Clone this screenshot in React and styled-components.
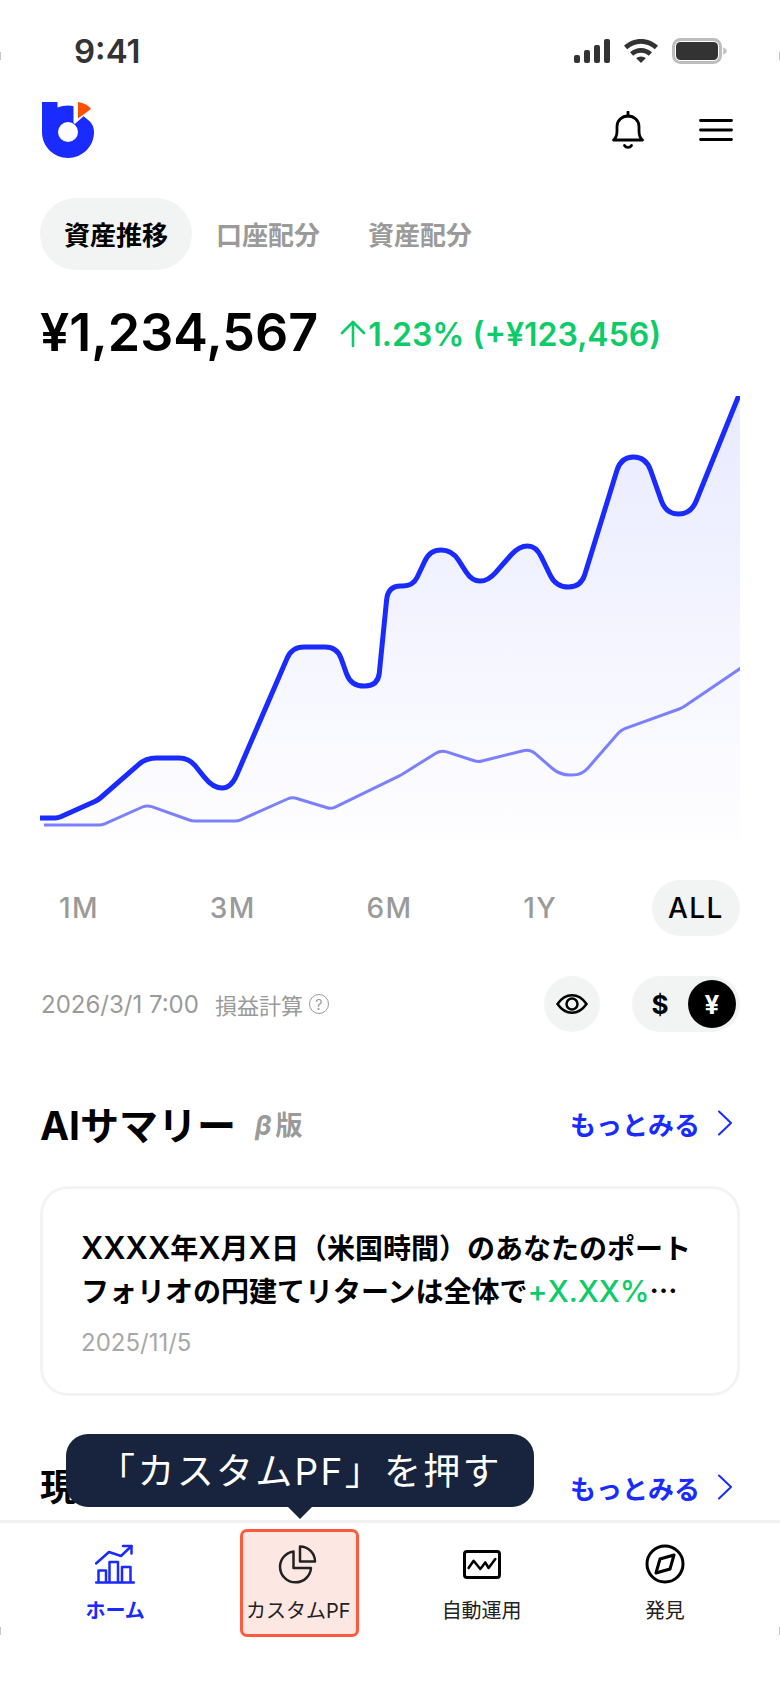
import React from 'react';
import styled, { createGlobalStyle } from "styled-components";

const BLUE = "#1a2bff";
const GREEN = "#0ccb68";
const GREY = "#9a9a9a";
const PILL = "#f2f4f3";

const GlobalStyle = createGlobalStyle`
    html, body {
        margin: 0;
        padding: 0;
        background: #fff;
    }
    *, *::before, *::after {
        box-sizing: border-box;
    }
`;

const Page = styled.div`
    position: relative;
    width: 780px;
    height: 1688px;
    overflow: hidden;
    color: #000;
    font-family: Inter, "Noto Sans CJK JP", sans-serif;
    background:
        linear-gradient(#c8c8c8, #c8c8c8) 0 52px / 1px 8px no-repeat,
        linear-gradient(#c8c8c8, #c8c8c8) 779px 52px / 1px 8px no-repeat,
        linear-gradient(#c8c8c8, #c8c8c8) 0 1627px / 1px 8px no-repeat,
        linear-gradient(#c8c8c8, #c8c8c8) 779px 1627px / 1px 8px no-repeat,
        #fff;
`;
const StatusBar = styled.div`
    height: 102px;
    padding: 0 53px 0 74px;
    display: flex;
    align-items: center;
    justify-content: space-between;
    color: #333;
`;
const Clock = styled.span`
    font-size: 33px;
    font-weight: 600;
`;
const StatusIcons = styled.div`
    display: flex;
    align-items: center;
    gap: 14px;
`;
const Main = styled.main`
    padding: 0 40px;
`;
const Header = styled.header`
    height: 56px;
    padding: 0 7px 0 2px;
    display: flex;
    align-items: center;
    justify-content: space-between;
`;
const HeaderActions = styled.div`
    display: flex;
    align-items: center;
    gap: 55px;
`;
const Tabs = styled.div`
    margin-top: 40px;
    display: flex;
`;
const Tab = styled.div`
    width: 152px;
    height: 72px;
    padding-bottom: 2px;
    border-radius: 36px;
    display: flex;
    align-items: center;
    justify-content: center;
    font-size: 26px;
    font-weight: 700;
    color: ${(p) => (p.$active ? "#000" : GREY)};
    background: ${(p) => (p.$active ? PILL : "transparent")};
`;
const BalanceRow = styled.div`
    margin-top: 30px;
    height: 64px;
    display: flex;
    align-items: center;
`;
const Balance = styled.div`
    font-size: 52px;
    font-weight: 600;
`;
const Change = styled.div`
    margin: 4px 0 0 22px;
    display: flex;
    align-items: center;
    gap: 2px;
    font-size: 32px;
    font-weight: 600;
    color: ${GREEN};
`;
const ChartSvg = styled.svg`
    display: block;
    margin-top: 32px;
    width: 700px;
    height: 444px;
`;
const Periods = styled.div`
    margin-top: 40px;
    padding-left: 3px;
    display: flex;
    justify-content: space-between;
`;
const Period = styled.div`
    height: 56px;
    padding: 0 16px;
    border-radius: 28px;
    display: flex;
    align-items: center;
    font-size: 28px;
    font-weight: 500;
    letter-spacing: 1.5px;
    color: ${(p) => (p.$active ? "#000" : GREY)};
    background: ${(p) => (p.$active ? PILL : "transparent")};
`;
const MetaRow = styled.div`
    margin-top: 40px;
    height: 56px;
    display: flex;
    align-items: center;
`;
const UpdatedAt = styled.span`
    margin-left: 1px;
    font-size: 24px;
    color: ${GREY};
`;
const PnlLabel = styled.span`
    margin-left: 16px;
    font-size: 22px;
    color: ${GREY};
`;
const HelpMark = styled.span`
    margin-left: 6px;
    width: 20px;
    height: 20px;
    border: 1.5px solid ${GREY};
    border-radius: 50%;
    display: flex;
    align-items: center;
    justify-content: center;
    font-size: 14px;
    color: ${GREY};
`;
const EyeButton = styled.div`
    margin-left: auto;
    width: 56px;
    height: 56px;
    border-radius: 50%;
    background: ${PILL};
    display: flex;
    align-items: center;
    justify-content: center;
`;
const Currency = styled.div`
    margin-left: 32px;
    width: 108px;
    height: 56px;
    padding: 4px;
    border-radius: 28px;
    background: ${PILL};
    display: flex;
    align-items: center;
    justify-content: space-between;
`;
const CurrencyOption = styled.span`
    width: 48px;
    height: 48px;
    border-radius: 50%;
    display: flex;
    align-items: center;
    justify-content: center;
    font-size: 26px;
    font-weight: 700;
    color: ${(p) => (p.$active ? "#fff" : "#000")};
    background: ${(p) => (p.$active ? "#000" : "transparent")};
`;
const SectionHead = styled.div`
    margin-top: 67px;
    height: 48px;
    display: flex;
    align-items: center;
`;
const SectionTitle = styled.h2`
    margin: 0;
    font-size: 39px;
    font-weight: 700;
`;
const HoldingsTitle = styled(SectionTitle)`
    margin-bottom: 5px;
    font-size: 37px;
`;
const Beta = styled.span`
    margin-left: 19px;
    font-size: 27px;
    font-weight: 700;
    color: ${GREY};
    i {
        margin-right: 4px;
    }
`;
const More = styled.div`
    margin-left: auto;
    padding-right: 7px;
    display: flex;
    align-items: center;
    gap: 17px;
    font-size: 26px;
    font-weight: 700;
    color: ${BLUE};
`;
const SummaryCard = styled.div`
    margin-top: 39px;
    height: 210px;
    padding: 38px 38px 0;
    border: 3px solid ${PILL};
    border-radius: 28px;
`;
const SummaryText = styled.p`
    margin: 0;
    font-size: 28px;
    font-weight: 600;
    line-height: 42px;
    white-space: nowrap;
`;
const Latin = styled.span`
    font-size: 31px;
`;
const Gain = styled.span`
    font-size: 30px;
    font-weight: 500;
    color: ${GREEN};
`;
const CardDate = styled.div`
    margin-top: 15px;
    font-size: 24px;
    color: #a8a8a8;
`;
const Nav = styled.nav`
    margin-top: 9px;
    height: 168px;
    padding: 0 23.5px;
    border-top: 3px solid #f1f1f1;
    display: grid;
    grid-template-columns: repeat(4, 1fr);
`;
const NavItem = styled.div`
    position: relative;
    isolation: isolate;
    padding-top: 21px;
    display: flex;
    flex-direction: column;
    align-items: center;
    color: ${(p) => (p.$current ? BLUE : "#222")};
    ${(p) => p.$target && `
        &::before {
            content: "";
            position: absolute;
            z-index: -1;
            top: 6px;
            left: calc(50% - 58px);
            width: 119px;
            height: 108px;
            border: 3px solid #ff5a3c;
            border-radius: 7px;
            background: #fde7e3;
        }
    `}
`;
const NavIcon = styled.div`
    height: 40px;
    display: flex;
    align-items: center;
    justify-content: center;
`;
const NavLabel = styled.span`
    margin-top: 15px;
    font-size: 20px;
    line-height: 24px;
    font-weight: ${(p) => (p.$current ? 700 : 400)};
`;
const Tooltip = styled.div`
    position: absolute;
    z-index: 2;
    left: 66px;
    top: 1434px;
    width: 468px;
    height: 73px;
    padding-bottom: 4px;
    border-radius: 22px;
    background: #18243d;
    color: #fff;
    display: flex;
    align-items: center;
    justify-content: center;
    font-size: 37px;
    letter-spacing: 2.3px;
    &::after {
        content: "";
        position: absolute;
        left: 222px;
        top: 73px;
        border-left: 12px solid transparent;
        border-right: 12px solid transparent;
        border-top: 12px solid #18243d;
    }
`;

// draws a polyline whose corners are cut with a quadratic, [x, y, radius]
const roundedLine = (points) => {
    let d = `M${points[0][0]} ${points[0][1]}`;
    for (let i = 1; i < points.length - 1; i++) {
        const [x, y, r = 0] = points[i];
        const [px, py] = points[i - 1];
        const [nx, ny] = points[i + 1];
        const inLen = Math.hypot(x - px, y - py);
        const outLen = Math.hypot(nx - x, ny - y);
        const ri = Math.min(r, inLen / 2);
        const ro = Math.min(r, outLen / 2);
        const ax = x - ((x - px) / inLen) * ri;
        const ay = y - ((y - py) / inLen) * ri;
        const bx = x + ((nx - x) / outLen) * ro;
        const by = y + ((ny - y) / outLen) * ro;
        d += ` L${ax.toFixed(1)} ${ay.toFixed(1)} Q${x} ${y} ${bx.toFixed(1)} ${by.toFixed(1)}`;
    }
    const last = points[points.length - 1];
    return `${d} L${last[0]} ${last[1]}`;
};

const assetLine = roundedLine([
    [40, 818], [58, 818, 3], [98, 800, 3], [146, 758, 10], [189, 758, 10], [213, 788, 14], [231, 788, 14],
    [292, 647, 12], [337, 647, 12], [351, 686, 13], [378, 686, 13], [388, 586, 14], [413, 586, 10],
    [430, 550, 12], [452, 550, 12], [472, 581, 11], [488, 581, 11], [519, 546, 12], [536, 546, 12],
    [556, 587, 13], [581, 587, 13], [621, 457, 14], [646, 457, 14], [666, 514, 14], [691, 514, 14], [741, 390],
]);
const principalLine = roundedLine([
    [44, 825], [102, 825, 3], [147, 805, 5], [192, 821, 3], [238, 821, 3], [292, 797, 5], [331, 809, 4],
    [401, 775, 3], [441, 750, 6], [478, 762, 4], [530, 749, 7], [560, 775, 10], [582, 775, 10],
    [621, 730, 4], [682, 708, 3], [741, 668],
]);

const Chart = () => (
    <ChartSvg viewBox="40 396 700 444">
        <defs>
            <linearGradient id="assetFill" x1="0" y1="0" x2="0" y2="1">
                <stop offset="0" stopColor={BLUE} stopOpacity="0.1" />
                <stop offset="1" stopColor={BLUE} stopOpacity="0.005" />
            </linearGradient>
        </defs>
        <path d={`${assetLine} L740 840 L40 840 Z`} fill="url(#assetFill)" />
        <path d={principalLine} fill="none" stroke="#7a80ff" strokeWidth="3" strokeLinejoin="round" />
        <path d={assetLine} fill="none" stroke={BLUE} strokeWidth="5" strokeLinejoin="round" />
    </ChartSvg>
);

const SignalIcon = () => (
    <svg width="36" height="24" viewBox="0 0 36 24" fill="currentColor">
        <rect x="0" y="16" width="6" height="8" rx="2" />
        <rect x="10" y="11" width="6" height="13" rx="2" />
        <rect x="20" y="6" width="6" height="18" rx="2" />
        <rect x="30" y="0" width="6" height="24" rx="2" />
    </svg>
);
const WifiIcon = () => (
    <svg width="34" height="24" viewBox="0 0 34 24" fill="currentColor">
        <path d="M17 0C23.5 0 29.4 2.5 34 6.8L30.8 10.2C27 6.8 22.3 4.7 17 4.7S7 6.8 3.2 10.2L0 6.8C4.6 2.5 10.5 0 17 0Z" />
        <path d="M17 9C21.2 9 25 10.6 28 13.3L24.8 16.7C22.6 14.8 20 13.7 17 13.7S11.4 14.8 9.2 16.7L6 13.3C9 10.6 12.8 9 17 9Z" />
        <path d="M17 17.5C18.8 17.5 20.5 18.2 21.8 19.3L17 24L12.2 19.3C13.5 18.2 15.2 17.5 17 17.5Z" />
    </svg>
);
const BatteryIcon = () => (
    <svg width="55" height="26" viewBox="0 0 55 26">
        <rect x="1.5" y="1.5" width="47" height="23" rx="7" fill="none" stroke="#bdbdbd" strokeWidth="3" />
        <rect x="4" y="4" width="42" height="18" rx="4.5" fill="#333" />
        <path d="M51 9.5C53.5 10 55 11.5 55 13S53.5 16 51 16.5Z" fill="#c8c8c8" />
    </svg>
);
const Logo = () => (
    <svg width="52" height="56" viewBox="0 0 52 56">
        <path
            d="M0 0H15.5V5.6C18.7 4.3 22.3 3.6 26 3.6C28 3.6 29.8 3.8 31.5 4.2V20.5C31.5 21.5 32.6 22 33.4 21.4L41.5 14.3C47.9 19 52 22.5 52 30C52 44.4 40.4 56 26 56S0 44.4 0 30Z"
            fill={BLUE}
        />
        <circle cx="26" cy="30" r="10" fill="#fff" />
        <path d="M36 0C42 1 46.5 3.5 49 7L36 16.5Z" fill="#ff5000" />
    </svg>
);
const BellIcon = () => (
    <svg width="32" height="38" viewBox="0 0 32 38" fill="none" stroke="#000" strokeWidth="2.8" strokeLinecap="round" strokeLinejoin="round">
        <path d="M16 1V5" />
        <path d="M1.5 29C4 27 5 24 5 20V15.5C5 9.5 10 5 16 5S27 9.5 27 15.5V20C27 24 28 27 30.5 29Z" />
        <path d="M12.5 34.5C14 37 18 37 19.5 34.5" />
    </svg>
);
const MenuIcon = () => (
    <svg width="34" height="24" viewBox="0 0 34 24" stroke="#000" strokeWidth="2.8" strokeLinecap="round">
        <path d="M1.5 2.5H32.5M1.5 12H32.5M1.5 21.5H32.5" />
    </svg>
);
const UpArrow = () => (
    <svg width="26" height="28" viewBox="0 0 26 28" fill="none" stroke={GREEN} strokeWidth="2.6" strokeLinecap="round" strokeLinejoin="round">
        <path d="M13 26V2M2 13L13 2L24 13" />
    </svg>
);
const EyeIcon = () => (
    <svg width="32" height="20" viewBox="0 0 32 20" fill="none" stroke="#000" strokeWidth="2.5">
        <path d="M1.5 10C6 3.5 11 1.3 16 1.3S26 3.5 30.5 10C26 16.5 21 18.7 16 18.7S6 16.5 1.5 10Z" />
        <circle cx="16" cy="10" r="5.5" />
    </svg>
);
const Chevron = () => (
    <svg width="16" height="26" viewBox="0 0 16 26" fill="none" stroke={BLUE} strokeWidth="2" strokeLinecap="round" strokeLinejoin="round">
        <path d="M2 1.5L14 13L2 24.5" />
    </svg>
);
const HomeIcon = () => (
    <svg width="40" height="40" viewBox="0 0 40 40" fill="none" stroke={BLUE} strokeWidth="2.5" strokeLinecap="round" strokeLinejoin="round">
        <path d="M1 38.5H39" />
        <path d="M3.5 38V26.5H11V38M14.5 38V18H23V38M27 38V23H35.5V38" />
        <path d="M1 19.5L14 8L26 12L36.5 2" />
        <path d="M28 2H36.5V9.5" />
    </svg>
);
const PieIcon = () => (
    <svg width="40" height="40" viewBox="0 0 40 40" fill="none" stroke="currentColor" strokeWidth="2.5" strokeLinejoin="round">
        <path d="M15.5 7.5A15.5 15.5 0 1 0 33 24H15.5Z" />
        <path d="M22 2.5A15 15 0 0 1 37 17.5H22Z" />
    </svg>
);
const AutoIcon = () => (
    <svg width="38" height="29" viewBox="0 0 38 29" fill="none" stroke="#000" strokeLinejoin="round" strokeLinecap="round">
        <rect x="1.5" y="1.5" width="35" height="26" rx="2.5" strokeWidth="3" />
        <path d="M5.6 18L10.6 10.7L17.3 19L22.3 12.4L25.6 18L32.3 9" strokeWidth="2.5" />
    </svg>
);
const CompassIcon = () => (
    <svg width="40" height="40" viewBox="0 0 40 40" fill="none" stroke="#000" strokeLinejoin="round">
        <circle cx="20" cy="20" r="18" strokeWidth="3" />
        <path d="M29 11L25 25L11 29L15 15Z" strokeWidth="3" />
    </svg>
);

const periods = ["1M", "3M", "6M", "1Y", "ALL"];

const MoreLink = () => (
    <More>
        もっとみる
        <Chevron />
    </More>
);

const App = () => {
    return (
        <Page lang="ja">
            <GlobalStyle />
            <StatusBar>
                <Clock>9:41</Clock>
                <StatusIcons>
                    <SignalIcon />
                    <WifiIcon />
                    <BatteryIcon />
                </StatusIcons>
            </StatusBar>
            <Main>
                <Header>
                    <Logo />
                    <HeaderActions>
                        <BellIcon />
                        <MenuIcon />
                    </HeaderActions>
                </Header>
                <Tabs>
                    <Tab $active>資産推移</Tab>
                    <Tab>口座配分</Tab>
                    <Tab>資産配分</Tab>
                </Tabs>
                <BalanceRow>
                    <Balance>¥1,234,567</Balance>
                    <Change>
                        <UpArrow />
                        1.23% (+¥123,456)
                    </Change>
                </BalanceRow>
                <Chart />
                <Periods>
                    {periods.map((p) => (
                        <Period key={p} $active={p === "ALL"}>{p}</Period>
                    ))}
                </Periods>
                <MetaRow>
                    <UpdatedAt>2026/3/1 7:00</UpdatedAt>
                    <PnlLabel>損益計算</PnlLabel>
                    <HelpMark>?</HelpMark>
                    <EyeButton>
                        <EyeIcon />
                    </EyeButton>
                    <Currency>
                        <CurrencyOption>$</CurrencyOption>
                        <CurrencyOption $active>¥</CurrencyOption>
                    </Currency>
                </MetaRow>
                <SectionHead>
                    <SectionTitle>AIサマリー</SectionTitle>
                    <Beta><i>β</i>版</Beta>
                    <MoreLink />
                </SectionHead>
                <SummaryCard>
                    <SummaryText>
                        <Latin>XXXX</Latin>年<Latin>X</Latin>月<Latin>X</Latin>日（米国時間）のあなたのポート<br />
                        フォリオの円建てリターンは全体で<Gain>+X.XX%</Gain>⋯
                    </SummaryText>
                    <CardDate>2025/11/5</CardDate>
                </SummaryCard>
                <SectionHead>
                    <HoldingsTitle>現在の資産</HoldingsTitle>
                    <MoreLink />
                </SectionHead>
            </Main>
            <Nav>
                <NavItem $current>
                    <NavIcon><HomeIcon /></NavIcon>
                    <NavLabel $current>ホーム</NavLabel>
                </NavItem>
                <NavItem $target>
                    <NavIcon><PieIcon /></NavIcon>
                    <NavLabel>カスタムPF</NavLabel>
                </NavItem>
                <NavItem>
                    <NavIcon><AutoIcon /></NavIcon>
                    <NavLabel>自動運用</NavLabel>
                </NavItem>
                <NavItem>
                    <NavIcon><CompassIcon /></NavIcon>
                    <NavLabel>発見</NavLabel>
                </NavItem>
            </Nav>
            <Tooltip>「カスタムPF」を押す</Tooltip>
        </Page>
    )
}

export default App
